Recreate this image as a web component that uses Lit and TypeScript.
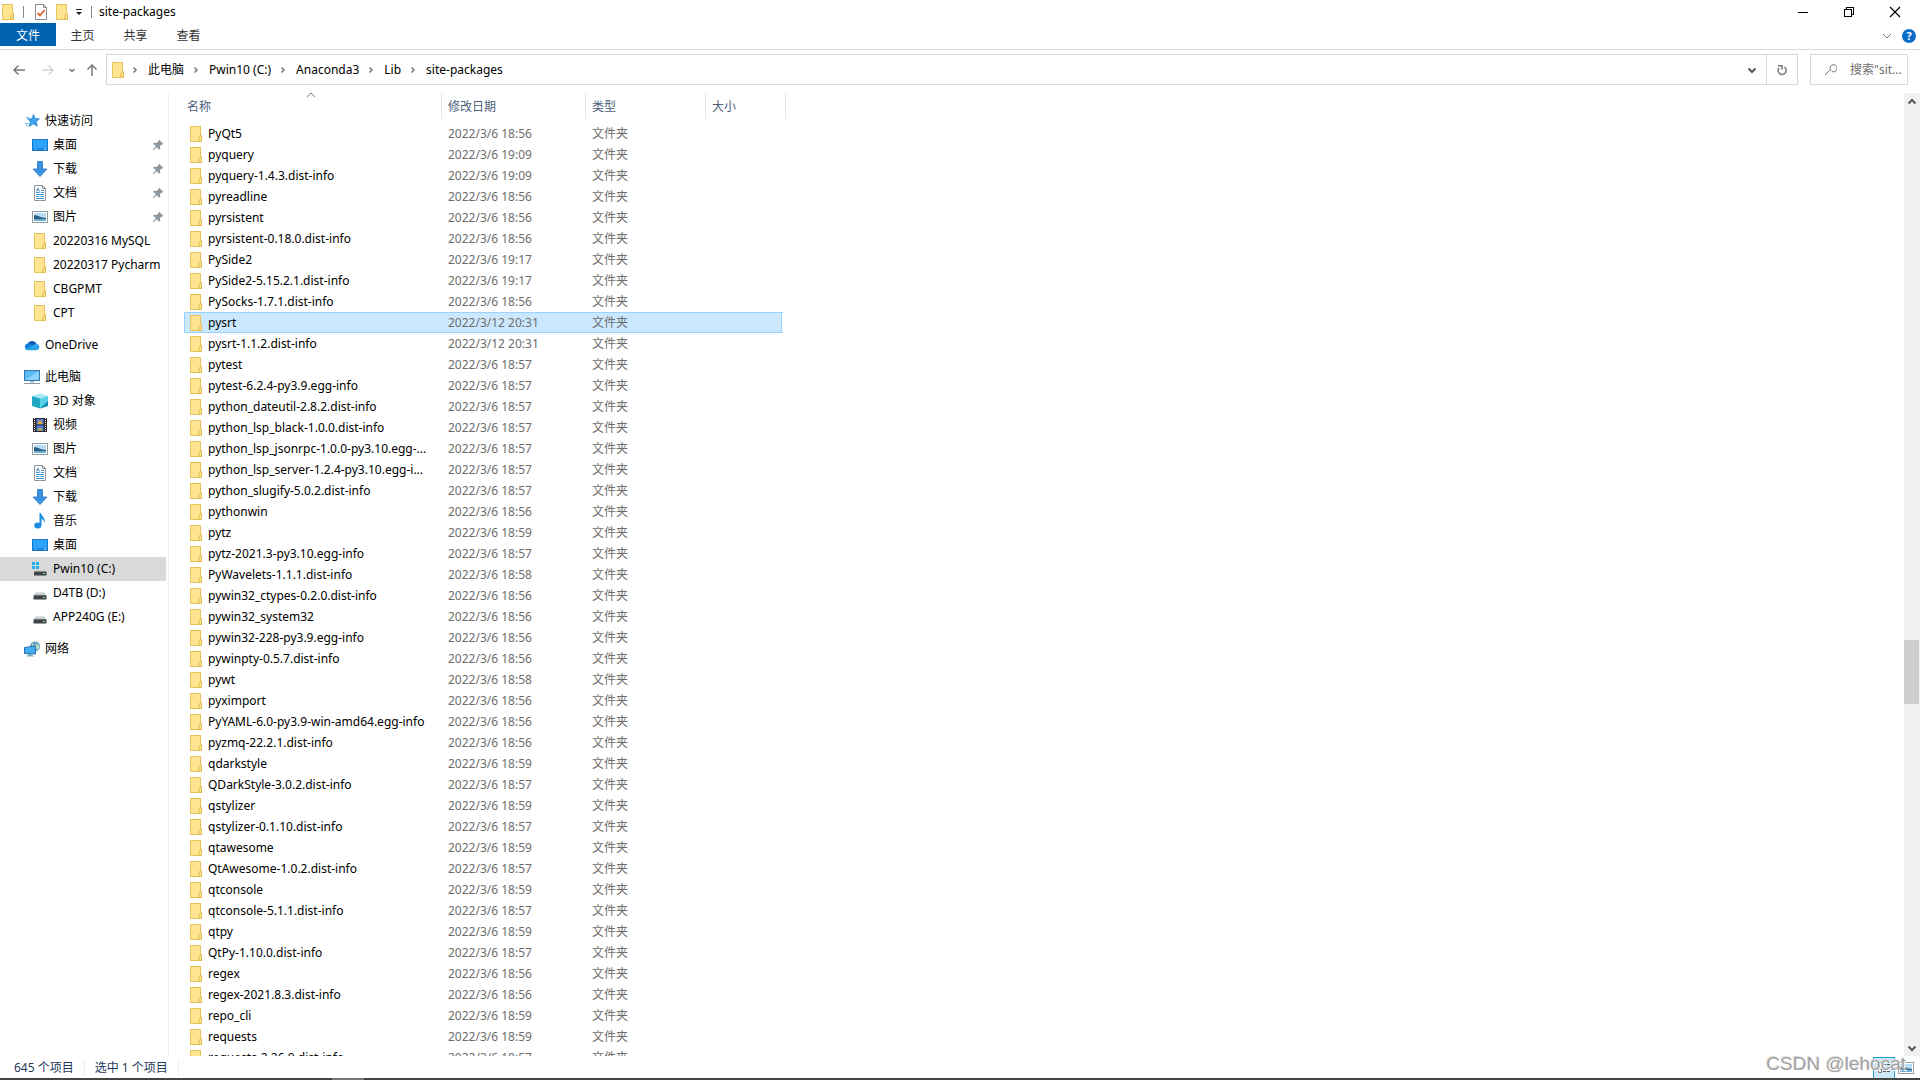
import { LitElement, html, svg, css, nothing } from "lit";
import { customElement, state } from "lit/decorators.js";
import { classMap } from "lit/directives/class-map.js";

type IconName =
  | "folder" | "check" | "star" | "desktop" | "download" | "doc" | "picture" | "cloud"
  | "pc" | "cube" | "video" | "music" | "drive" | "windrive" | "network";

const shapes: Record<IconName, unknown> = {
  folder: svg`
    <rect x="2.5" y="0.5" width="10" height="15" fill="#ffe591" stroke="#e6c35a"/>
    <path d="M12.500 9.500h1v6h-2.500v-4z" fill="#ffe591" stroke="#e0b94a"/>`,
  check: svg`
    <path d="M2.500.500h8l3 3v12h-11z" fill="#fff" stroke="#8a8a8a"/>
    <path d="M10.500.500v3h3" fill="none" stroke="#8a8a8a"/>
    <path d="M4.500 9l2.500 2.500 4.500-5.500" fill="none" stroke="#e0622c" stroke-width="1.800"/>`,
  star: svg`
    <path d="M9.500 1.500l1.700 4 4.300.3-3.300 2.900 1.200 4.600-4.100-2.500-4.300 2.600 1.500-4.700-3-2.800 4.300-.2z" fill="#38a3ee" stroke="#1f7fc8" stroke-width=".7"/>
    <path d="M2 4.500h3M1 10.500h3.500M2 12.500h2" stroke="#63b8f2"/>`,
  desktop: svg`
    <rect x=".5" y="2.500" width="15" height="11" fill="#2ea3fb" stroke="#1879c4"/>
    <path d="M1 12h14" stroke="#0c6dbb"/><path d="M3 12h1M12 12h2" stroke="#bfe3ff"/>`,
  download: svg`<path d="M5.500.500h5v7.500h4.500l-7 7.500L1 8h4.500z" fill="#3a94e4" stroke="#2a76c4" stroke-width=".8"/>`,
  doc: svg`
    <path d="M2.500.500h8l3 3v12h-11z" fill="#fff" stroke="#8b949c"/>
    <path d="M10.500.500v3h3" fill="none" stroke="#8b949c"/>
    <path d="M4 7.500h3.500M9 5.500h3M9 7.500h3M4 9.500h8M4 11.500h3M8.500 11.500h3.500M4 13.500h8" stroke="#3f97d0"/>
    <path d="M4.500 6.500l1.500-3 1.500 3" fill="none" stroke="#2f7fb8"/>`,
  picture: svg`
    <rect x=".5" y="2.500" width="15" height="11" fill="#fff" stroke="#939ca4"/>
    <rect x="2" y="4" width="12" height="8" fill="#b6dcf6"/>
    <path d="M2 6.500c3-1 6 2.500 12 2.500v1.500H2z" fill="#2f6385"/>
    <path d="M2 10.500h12v1.500H2z" fill="#6fb1de"/>`,
  cloud: svg`
    <path d="M3.500 7a5 5 0 0 1 9-.5L8 11z" fill="#0a5cb4"/>
    <path d="M3.500 13a3.300 3.300 0 0 1 .3-6.500c1.500-.3 3 .2 4.200 1.300l4 5.200z" fill="#1180d8"/>
    <path d="M1.500 12.200L10.500 7.200a3.200 3.200 0 0 1 2.500-.2 3.200 3.200 0 0 1 0 6.200H3.500q-1.200 0-2-1z" fill="#29a4ea"/>`,
  pc: svg`
    <rect x=".5" y="1.500" width="15" height="10" fill="#5bbcf7" stroke="#3478aa"/>
    <path d="M1 11L15 2v9z" fill="#8ad2fb"/>
    <path d="M6 12h4v1.500H6z" fill="#9bb0c0"/><path d="M0 14.500h16" stroke="#8b9aa6"/>`,
  cube: svg`
    <path d="M0 3l8-2.500L16 3 8 5.500z" fill="#a8ecf5"/>
    <path d="M0 3l8 2.500v10L0 13z" fill="#22a9c4"/>
    <path d="M16 3L8 5.500v10l8-2.500z" fill="#58d1e6"/>
    <path d="M16 8v5l-8 2.500z" fill="#168dae"/>`,
  video: svg`
    <rect x="1" y="1" width="14" height="14" fill="#2d2d30"/>
    <path d="M2.500 1v14M13.500 1v14" stroke="#e8e8e8" stroke-dasharray="1 1"/>
    <rect x="4.500" y="2" width="7" height="5.500" fill="#5d7fd0"/><rect x="4.500" y="8.500" width="7" height="5.500" fill="#4b7fdc"/>
    <path d="M5 7l3-4 3 4zM5 13.500l3-3 3 3z" fill="#e0a52c"/>`,
  music: svg`
    <ellipse cx="5.800" cy="12.500" rx="3.600" ry="3" fill="#1d8fe0"/>
    <path d="M7.500 12.500V0h1.500c.5 3.500 5 4.500 3.500 10.500-.2-3-1.500-4-3-4.500v6.500z" fill="#1d8fe0"/>`,
  drive: svg`
    <path d="M3.500 7.500h9l2 3h-13z" fill="#c9cccd"/>
    <rect x="1.500" y="10.200" width="13" height="4.300" rx=".5" fill="#3f4548"/><rect x="11" y="12" width="2" height="1" fill="#7fe07a"/>`,
  windrive: svg`
    <path d="M0 1h3v3H0zM4 1h3v3H4zM0 5h3v3H0zM4 5h3v3H4z" fill="#1cb1ee"/>
    <path d="M5 9h8l1.500 2h-12z" fill="#c9cccd"/>
    <rect x="2" y="10.500" width="12.500" height="4" rx=".5" fill="#3f4548"/><rect x="11" y="12" width="2" height="1" fill="#7fe07a"/>`,
  network: svg`
    <circle cx="11" cy="5.500" r="5" fill="#6d9fc0"/>
    <path d="M8 2c2 1 2 3 0 4zM11 4c2-1 3 0 4.500 1.500C15 8 13 9 12 8z" fill="#b9e2c9"/>
    <path d="M.500 6.500l11-1.500v8l-11-.5z" fill="#44aef2" stroke="#2a6fa5"/>
    <path d="M4 13h4v1.500h2v1H2.500v-1H4z" fill="#7fa9c4"/>`,
};

const icon = (name: IconName) =>
  html`<svg class="icon" viewBox="0 0 16 16" width="16" height="16" aria-hidden="true">${shapes[name]}</svg>`;

const stroke = (d: string, w = 12, cls = "") =>
  html`<svg class="line ${cls}" viewBox="0 0 ${w} ${w}" width=${w} height=${w} aria-hidden="true"><path d=${d}></path></svg>`;

const pin = html`<svg class="pin" viewBox="0 0 12 12" width="12" height="12" aria-hidden="true">
  <path d="M7 .5l4.500 4.500-1.500.3-2 2 .2 2.700-1 .7L4.700 8.200 1 11.500.5 11l3.300-3.700L1.300 4.800l.7-1 2.700.2 2-2z" fill="#8d979f"/></svg>`;

interface Place { label: string; icon: IconName; pinned?: boolean; current?: boolean }
interface Group { head: Place; items: Place[] }

const groups: Group[] = [
  { head: { label: "快速访问", icon: "star" }, items: [
    { label: "桌面", icon: "desktop", pinned: true },
    { label: "下载", icon: "download", pinned: true },
    { label: "文档", icon: "doc", pinned: true },
    { label: "图片", icon: "picture", pinned: true },
    { label: "20220316 MySQL", icon: "folder" },
    { label: "20220317 Pycharm", icon: "folder" },
    { label: "CBGPMT", icon: "folder" },
    { label: "CPT", icon: "folder" },
  ] },
  { head: { label: "OneDrive", icon: "cloud" }, items: [] },
  { head: { label: "此电脑", icon: "pc" }, items: [
    { label: "3D 对象", icon: "cube" },
    { label: "视频", icon: "video" },
    { label: "图片", icon: "picture" },
    { label: "文档", icon: "doc" },
    { label: "下载", icon: "download" },
    { label: "音乐", icon: "music" },
    { label: "桌面", icon: "desktop" },
    { label: "Pwin10 (C:)", icon: "windrive", current: true },
    { label: "D4TB (D:)", icon: "drive" },
    { label: "APP240G (E:)", icon: "drive" },
  ] },
  { head: { label: "网络", icon: "network" }, items: [] },
];

const files: [string, string][] = [
  ["PyQt5", "6 18:56"], ["pyquery", "6 19:09"], ["pyquery-1.4.3.dist-info", "6 19:09"],
  ["pyreadline", "6 18:56"], ["pyrsistent", "6 18:56"], ["pyrsistent-0.18.0.dist-info", "6 18:56"],
  ["PySide2", "6 19:17"], ["PySide2-5.15.2.1.dist-info", "6 19:17"], ["PySocks-1.7.1.dist-info", "6 18:56"],
  ["pysrt", "12 20:31"], ["pysrt-1.1.2.dist-info", "12 20:31"], ["pytest", "6 18:57"],
  ["pytest-6.2.4-py3.9.egg-info", "6 18:57"], ["python_dateutil-2.8.2.dist-info", "6 18:57"],
  ["python_lsp_black-1.0.0.dist-info", "6 18:57"], ["python_lsp_jsonrpc-1.0.0-py3.10.egg-...", "6 18:57"],
  ["python_lsp_server-1.2.4-py3.10.egg-i...", "6 18:57"], ["python_slugify-5.0.2.dist-info", "6 18:57"],
  ["pythonwin", "6 18:56"], ["pytz", "6 18:59"], ["pytz-2021.3-py3.10.egg-info", "6 18:57"],
  ["PyWavelets-1.1.1.dist-info", "6 18:58"], ["pywin32_ctypes-0.2.0.dist-info", "6 18:56"],
  ["pywin32_system32", "6 18:56"], ["pywin32-228-py3.9.egg-info", "6 18:56"],
  ["pywinpty-0.5.7.dist-info", "6 18:56"], ["pywt", "6 18:58"], ["pyximport", "6 18:56"],
  ["PyYAML-6.0-py3.9-win-amd64.egg-info", "6 18:56"], ["pyzmq-22.2.1.dist-info", "6 18:56"],
  ["qdarkstyle", "6 18:59"], ["QDarkStyle-3.0.2.dist-info", "6 18:57"], ["qstylizer", "6 18:59"],
  ["qstylizer-0.1.10.dist-info", "6 18:57"], ["qtawesome", "6 18:59"], ["QtAwesome-1.0.2.dist-info", "6 18:57"],
  ["qtconsole", "6 18:59"], ["qtconsole-5.1.1.dist-info", "6 18:57"], ["qtpy", "6 18:59"],
  ["QtPy-1.10.0.dist-info", "6 18:57"], ["regex", "6 18:56"], ["regex-2021.8.3.dist-info", "6 18:56"],
  ["repo_cli", "6 18:59"], ["requests", "6 18:59"], ["requests-2.26.0.dist-info", "6 18:57"],
];

const crumbs = ["此电脑", "Pwin10 (C:)", "Anaconda3", "Lib", "site-packages"];

@customElement("app-root")
export class AppRoot extends LitElement {
  @state() private selected = "pysrt";

  static styles = css`
    :host {
      display: flex; flex-direction: column; height: 100vh; position: relative; overflow: hidden;
      background: #fff; color: #000;
      font: 12px/20px "Noto Sans", "Noto Sans CJK SC", sans-serif;
    }
    * { box-sizing: border-box; }
    button, input { font: inherit; color: inherit; background: none; border: 0; padding: 0; margin: 0; }
    a { color: inherit; text-decoration: none; }
    svg { display: block; flex: none; }
    .line { fill: none; stroke: #777; stroke-width: 1.5; }
    .crisp { stroke: #000; stroke-width: 1; shape-rendering: crispEdges; }
    .thin { stroke-width: 1; }
    .black { stroke: #000; stroke-width: 1.2; }
    .dark { stroke: #555; stroke-width: 2; }
    .faint { stroke: #d4d4d4; }

    .titlebar { display: flex; align-items: center; height: 23px; flex: none; }
    .quick { display: flex; align-items: center; height: 23px; }
    .sep { width: 1px; height: 12px; background: #8a8a8a; margin: 0 9px 0 7px; }
    .sep.last { margin: 0 7px 0 8px; }
    .quick button + button { margin-left: 5px; }
    .caption { margin: 0; font-size: 12px; font-weight: 400; flex: 1; }
    .window { display: flex; padding-right: 2px; }
    .window button { width: 46px; height: 22px; display: grid; place-items: center; }

    .ribbon { display: flex; align-items: flex-start; height: 27px; flex: none; border-bottom: 1px solid #dadbdc; }
    .ribbon .tab { width: 53px; height: 23px; padding-top: 2px; color: #333; }
    .ribbon .file { width: 56px; background: #0063b1; color: #fff; }
    .ribbon .grow { flex: 1; }
    .ribbon .expand { height: 25px; }
    .help { width: 14px; height: 14px; margin: 6px 4px 0 10px; border-radius: 50%; background: #0a6cc8; color: #fff; font-size: 11px; font-weight: 700; line-height: 14px; text-align: center; }

    .address { display: flex; align-items: center; height: 43px; flex: none; padding: 0 12px 4px; }
    .arrows { display: flex; align-items: center; width: 94px; }
    .arrows button:nth-child(2) { margin-left: 15px; }
    .arrows button:nth-child(3) { margin-left: 13px; }
    .arrows button:nth-child(4) { margin-left: 9px; }
    .box { display: flex; align-items: center; height: 31px; border: 1px solid #d9d9d9; }
    .path { flex: 1; padding-left: 3px; }
    .path ol { display: flex; align-items: center; list-style: none; margin: 0; padding: 0; flex: 1; }
    .path li { display: flex; align-items: center; }
    .path li svg { margin: 0 9px 0 8px; }
    .path li:first-child svg { margin: 0 9px 0 5px; }
    .drop { width: 29px; height: 29px; display: grid; place-items: center; }
    .reload { width: 32px; margin-left: -1px; display: grid; place-items: center; }
    .search { width: 98px; margin-left: 12px; padding: 0 0 0 13px; gap: 13px; }
    .search input { width: 100%; min-width: 0; outline: 0; }
    .search input::placeholder { color: #6d6d6d; opacity: 1; }

    .body { display: flex; flex: 1; min-height: 0; }
    .nav { width: 169px; flex: none; padding-top: 16px; border-right: 1px solid #f0f0f0; }
    .nav ul { list-style: none; margin: 0 0 8px; padding: 0; }
    .nav a { display: flex; align-items: center; height: 24px; padding-left: 32px; margin-right: 2px; white-space: nowrap; gap: 5px; }
    .nav .head a { padding-left: 24px; }
    .nav .current { background: #d9d9d9; }
    .nav .pin { margin-left: auto; margin-right: 2px; }

    .list { flex: 1; min-width: 0; overflow: hidden; padding-left: 15px; }
    table { border-collapse: separate; border-spacing: 0; table-layout: fixed; width: 602px; }
    col.name { width: 258px; } col.date { width: 144px; } col.type { width: 120px; }
    th { height: 26px; padding: 2px 0 0 6px; text-align: left; font-weight: 400; color: #4c607a; border-right: 1px solid #e5e5e5; position: relative; }
    th:first-child { padding-left: 3px; }
    .sort { position: absolute; left: 122px; top: -2px; }
    .gap td { height: 4px; padding: 0; }
    .row td { height: 21px; padding: 0 0 0 6px; line-height: 19px; color: #6d6d6d; white-space: nowrap; border: 1px solid transparent; border-width: 1px 0; }
    .row td:first-child { padding: 0 8px 0 3px; border-left-width: 1px; color: #000; }
    .entry { display: flex; align-items: center; gap: 4px; height: 19px; }
    .chosen td { background: #cce8ff; border-color: #99d1ff; }
    .chosen td:last-child { background: linear-gradient(90deg, #cce8ff 75px, #99d1ff 75px, #99d1ff 76px, #fff 76px); background-origin: border-box; border-color: transparent; border-image: linear-gradient(90deg, #99d1ff 76px, transparent 76px) 1; }

    .scroll { width: 16px; flex: none; background: #f0f0f0; display: grid; grid-template-rows: 17px 530fr 64px 335fr 17px; justify-items: center; align-items: center; }
    .thumb { grid-row: 3; width: 15px; height: 64px; background: #cdcdcd; justify-self: start; }
    .scroll .down { grid-row: 5; }

    .status { display: flex; align-items: center; height: 22px; flex: none; color: #1e395b; padding: 2px 0 0 14px; }
    .status span { padding-right: 10px; margin-right: 10px; border-right: 1px solid #eee; line-height: 16px; }
    .views { display: flex; margin-left: auto; }
    .views button { width: 22px; height: 22px; display: grid; place-items: center; }
    .views button:last-child { margin-right: 3px; }
    .views .on { background: #cce8f6; border: 1px solid #26a0da; }
    .edge { height: 2px; flex: none; background: linear-gradient(90deg, #444 332px, #777 332px, #777 364px, #444 364px); }
    .mark { position: absolute; right: 14px; bottom: 5px; font: 19px/22px "Liberation Sans", sans-serif; color: #a2a2a2; text-shadow: 1px 1px 0 #fff, -1px -1px 0 #ddd; pointer-events: none; }
  `;

  private place(p: Place) {
    return html`<li><a href="#" class=${classMap({ current: !!p.current })}>${icon(p.icon)}<span>${p.label}</span>${p.pinned ? pin : nothing}</a></li>`;
  }

  render() {
    return html`
      <header class="titlebar">
        <div class="quick">
          ${icon("folder")}<i class="sep"></i>
          <button aria-label="属性">${icon("check")}</button>
          <button aria-label="新建文件夹">${icon("folder")}</button>
          <button aria-label="自定义快速访问工具栏"><svg viewBox="0 0 8 8" width="8" height="8"><path d="M1 1h6v1H1zM1 4h6L4 7z" fill="#222"/></svg></button>
          <i class="sep last"></i>
        </div>
        <h1 class="caption">site-packages</h1>
        <div class="window">
          <button aria-label="最小化">${stroke("M1 6.500h10", 12, "crisp")}</button>
          <button aria-label="还原">${stroke("M1.500 3.500h7v7h-7zM3.500 3.500v-2h7v7h-2", 12, "crisp")}</button>
          <button aria-label="关闭">${stroke("M1 1l10 10M11 1L1 11", 12, "black")}</button>
        </div>
      </header>

      <nav class="ribbon" aria-label="功能区">
        <button class="tab file">文件</button><button class="tab">主页</button><button class="tab">共享</button><button class="tab">查看</button>
        <span class="grow"></span>
        <button class="expand" aria-label="展开功能区">${stroke("M1 3l4 4 4-4", 10, "thin")}</button>
        <button class="help" aria-label="帮助">?</button>
      </nav>

      <div class="address">
        <div class="arrows">
          <button aria-label="后退">${stroke("M13 7H2M6.500 2.500L2 7l4.500 4.500", 14)}</button>
          <button aria-label="前进">${stroke("M1 7h11M7.500 2.500L12 7l-4.500 4.500", 14, "faint")}</button>
          <button aria-label="最近浏览的位置">${stroke("M1.500 3L4 5.500 6.500 3", 8)}</button>
          <button aria-label="上移">${stroke("M7 13V2M2.500 6.500L7 2l4.500 4.500", 14)}</button>
        </div>
        <div class="box path">
          ${icon("folder")}
          <ol>${crumbs.map((c) => html`<li>${stroke("M2.500 1.500L5 4 2.500 6.500", 8)}<button>${c}</button></li>`)}</ol>
          <button class="drop" aria-label="以前的位置">${stroke("M1.500 3.500L5 7l3.500-3.500", 10, "dark")}</button>
        </div>
        <button class="box reload" aria-label="刷新">${stroke("M8.500 3.200a4 4 0 1 1-5.500.8M2 1.800h4v4", 12)}</button>
        <label class="box search">
          ${stroke("M7.500 8.200a3.600 3.600 0 1 1 .5.3M5.700 7.300L1 12", 13, "thin")}
          <input type="text" aria-label="搜索" placeholder='搜索"sit...'>
        </label>
      </div>

      <main class="body">
        <nav class="nav" aria-label="导航窗格">
          ${groups.map((g) => html`<ul>
            <li class="head"><a href="#">${icon(g.head.icon)}<span>${g.head.label}</span></a></li>
            ${g.items.map((p) => this.place(p))}
          </ul>`)}
        </nav>
        <section class="list">
          <table>
            <colgroup><col class="name"><col class="date"><col class="type"><col></colgroup>
            <thead><tr>
              <th>名称<span class="sort">${stroke("M1 6l4-4 4 4", 10, "thin")}</span></th>
              <th>修改日期</th><th>类型</th><th>大小</th>
            </tr></thead>
            <tbody>
              <tr class="gap"><td colspan="4"></td></tr>
              ${files.map(([name, when]) => html`
                <tr class=${classMap({ row: true, chosen: name === this.selected })} @click=${() => (this.selected = name)}>
                  <td><div class="entry">${icon("folder")}<span>${name}</span></div></td>
                  <td>2022/3/${when}</td><td>文件夹</td><td></td>
                </tr>`)}
            </tbody>
          </table>
        </section>
        <div class="scroll" aria-hidden="true">
          ${stroke("M1.500 6.500L5 3l3.500 3.500", 10, "dark")}
          <div class="thumb"></div>
          ${stroke("M1.500 3.500L5 7l3.500-3.500", 10, "dark down")}
        </div>
      </main>

      <footer class="status">
        <span>645 个项目</span><span>选中 1 个项目</span>
        <div class="views">
          <button class="on" aria-label="详细信息"><svg viewBox="0 0 16 16" width="16" height="16"><path d="M2.500 2.500h3v3h-3zM2.500 9.500h3v3h-3z" fill="#fff" stroke="#777"/><path d="M7 4.500h3M11 4.500h3M7 11.500h3M11 11.500h3" stroke="#555"/></svg></button>
          <button aria-label="大缩略图">${icon("picture")}</button>
        </div>
      </footer>
      <div class="edge"></div>
      <div class="mark">CSDN @lehocat</div>
    `;
  }
}
